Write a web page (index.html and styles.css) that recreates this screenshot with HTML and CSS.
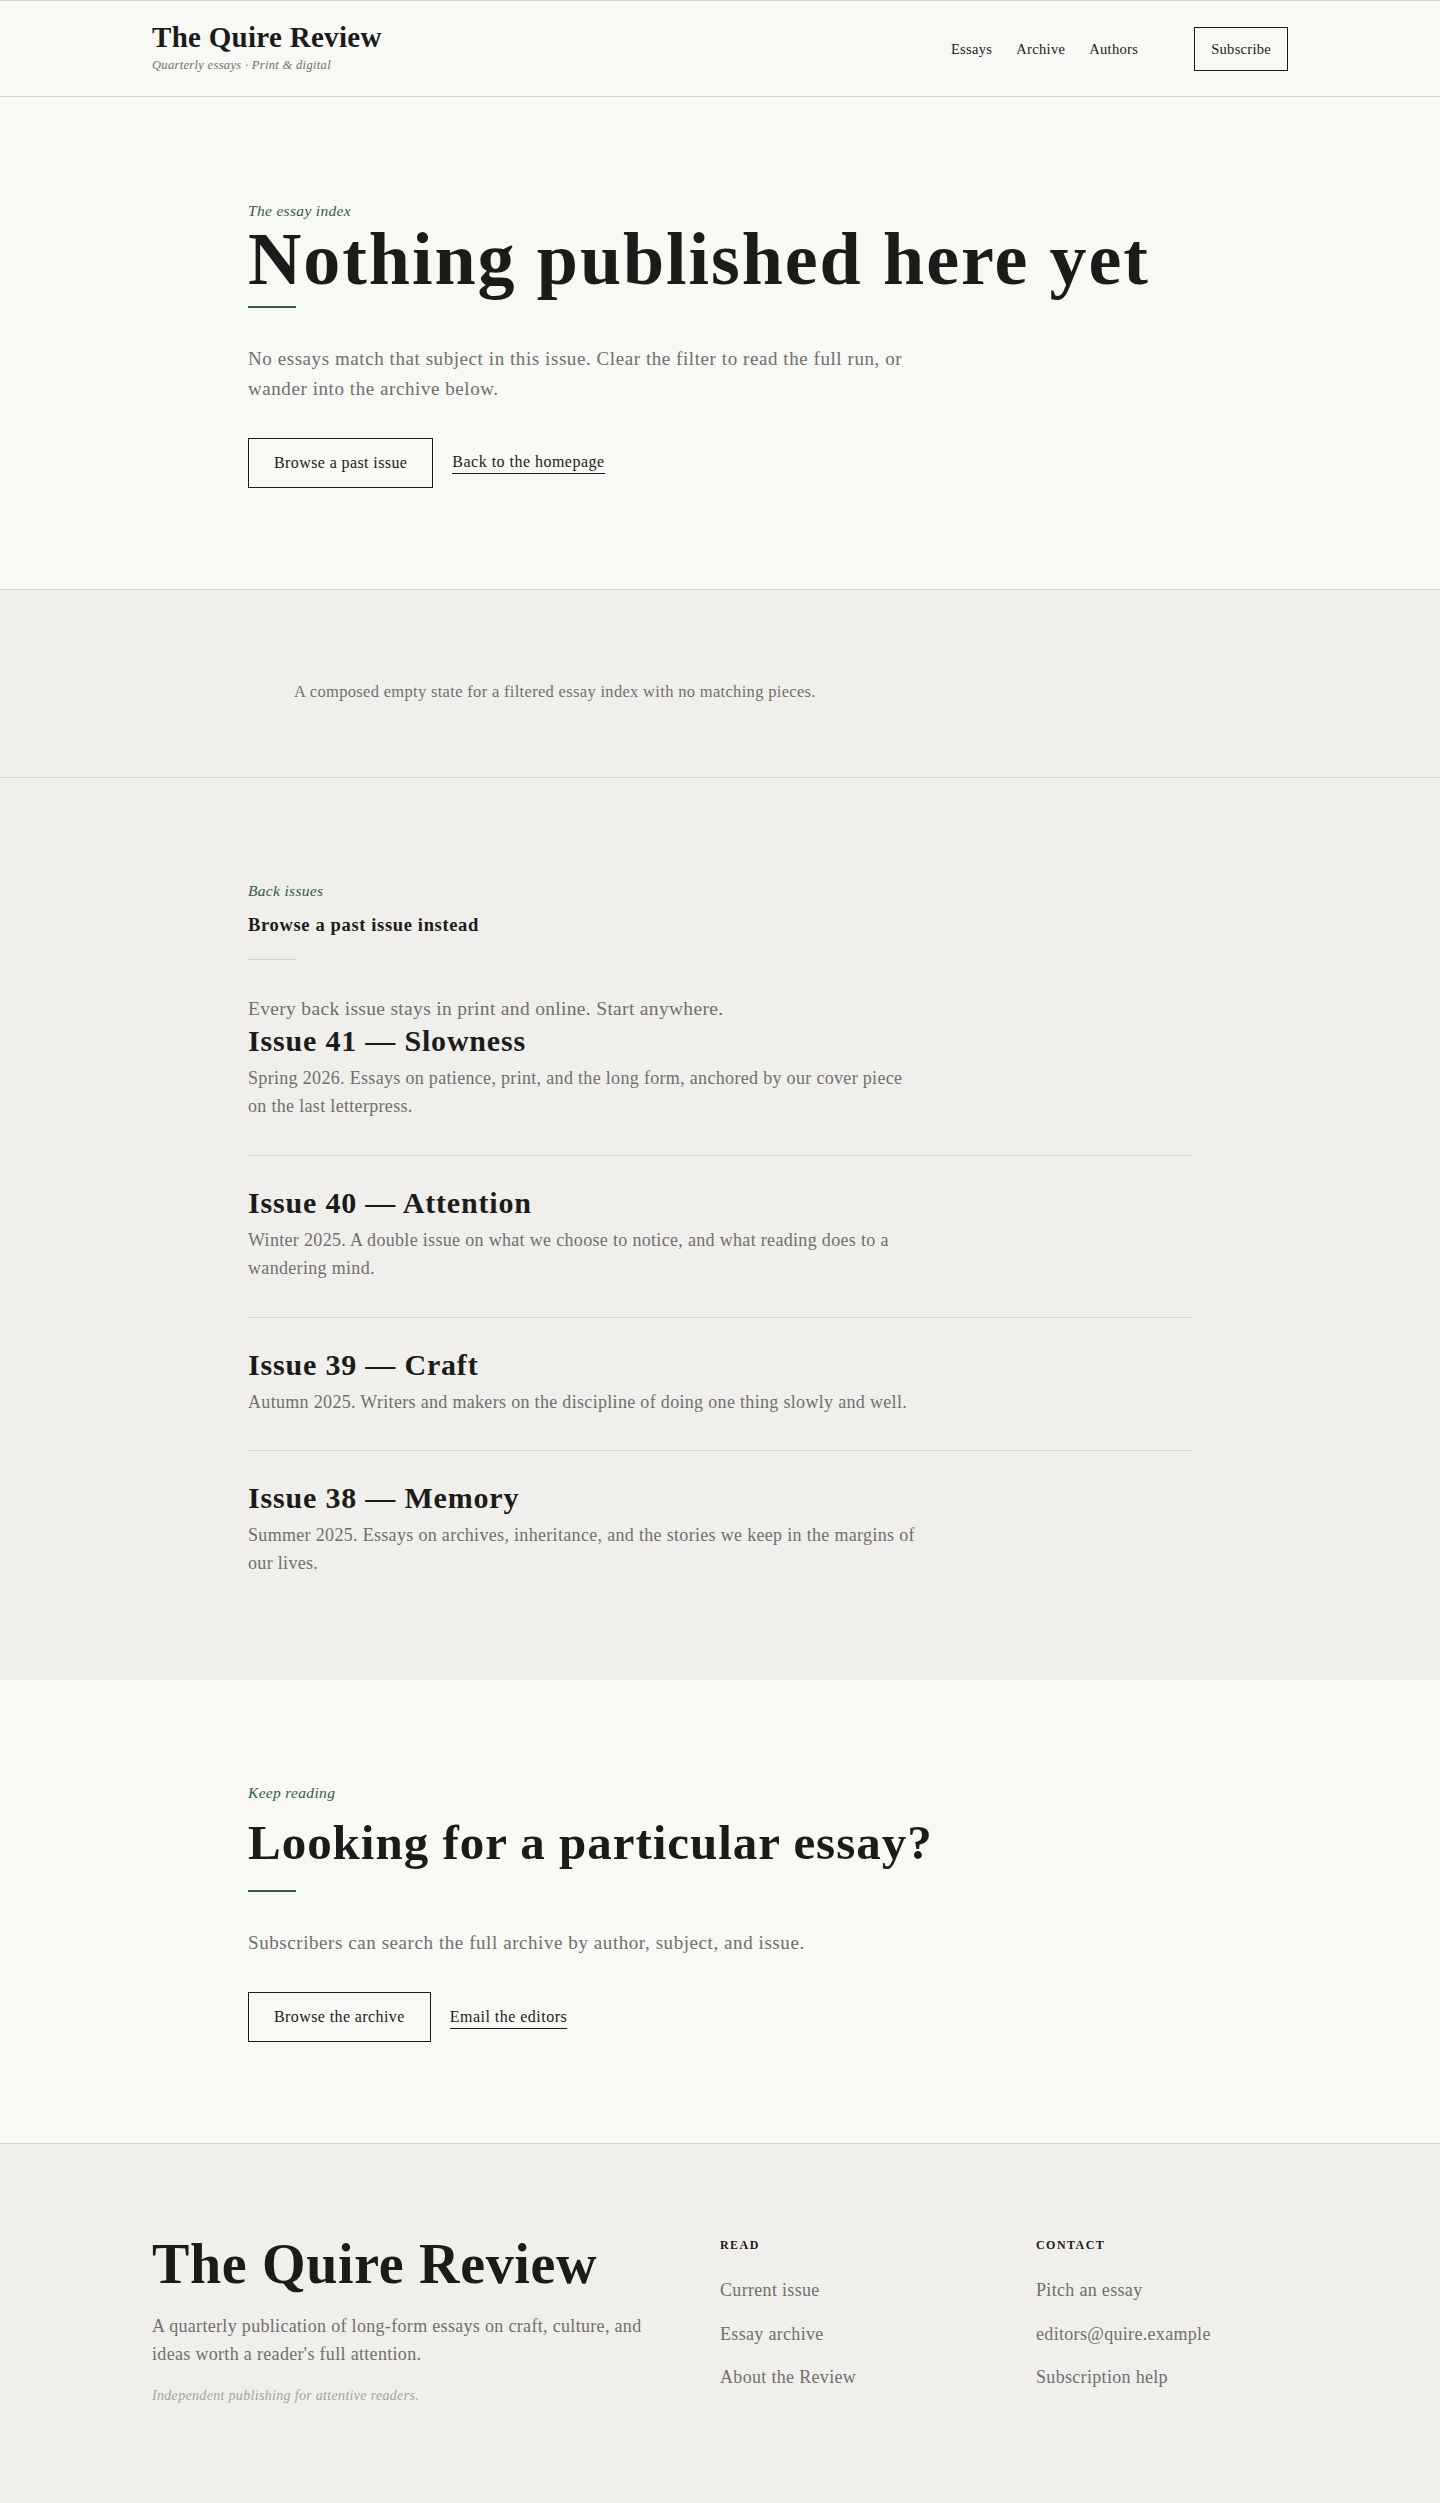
FILE: index.html
```html
<!DOCTYPE html>
<html lang="en">
<head>
<meta charset="utf-8">
<title>The Quire Review — Essay index</title>
<link rel="stylesheet" href="styles.css">
</head>
<body>
<header class="site-header">
  <div class="wide header-inner">
    <div class="brand">
      <a class="logo" href="#">The Quire Review</a>
      <p class="tagline">Quarterly essays · Print &amp; digital</p>
    </div>
    <div class="header-right">
      <nav class="nav">
        <a href="#">Essays</a>
        <a href="#">Archive</a>
        <a href="#">Authors</a>
      </nav>
      <a class="btn btn-sm" href="#">Subscribe</a>
    </div>
  </div>
</header>

<main>
  <section class="hero">
    <div class="narrow">
      <p class="eyebrow">The essay index</p>
      <h1 class="hero-title">Nothing published here yet</h1>
      <span class="accent-rule"></span>
      <p class="lede">No essays match that subject in this issue. Clear the filter to read the full run, or wander into the archive below.</p>
      <div class="actions">
        <a class="btn" href="#">Browse a past issue</a>
        <a class="text-link" href="#">Back to the homepage</a>
      </div>
    </div>
  </section>

  <section class="figure-band">
    <div class="narrow">
      <p class="caption">A composed empty state for a filtered essay index with no matching pieces.</p>
    </div>
  </section>

  <section class="issues">
    <div class="narrow">
      <p class="eyebrow eyebrow-sm">Back issues</p>
      <h2 class="issues-title">Browse a past issue instead</h2>
      <span class="thin-rule"></span>
      <p class="issues-intro">Every back issue stays in print and online. Start anywhere.</p>
      <ul class="issue-list">
        <li class="issue">
          <h3 class="issue-name">Issue 41 — Slowness</h3>
          <p class="issue-desc">Spring 2026. Essays on patience, print, and the long form, anchored by our cover piece on the last letterpress.</p>
        </li>
        <li class="issue">
          <h3 class="issue-name">Issue 40 — Attention</h3>
          <p class="issue-desc">Winter 2025. A double issue on what we choose to notice, and what reading does to a wandering mind.</p>
        </li>
        <li class="issue">
          <h3 class="issue-name">Issue 39 — Craft</h3>
          <p class="issue-desc">Autumn 2025. Writers and makers on the discipline of doing one thing slowly and well.</p>
        </li>
        <li class="issue">
          <h3 class="issue-name">Issue 38 — Memory</h3>
          <p class="issue-desc">Summer 2025. Essays on archives, inheritance, and the stories we keep in the margins of our lives.</p>
        </li>
      </ul>
    </div>
  </section>

  <section class="cta">
    <div class="narrow">
      <p class="eyebrow eyebrow-sm">Keep reading</p>
      <h2 class="cta-title">Looking for a particular essay?</h2>
      <span class="accent-rule"></span>
      <p class="lede">Subscribers can search the full archive by author, subject, and issue.</p>
      <div class="actions">
        <a class="btn" href="#">Browse the archive</a>
        <a class="text-link" href="#">Email the editors</a>
      </div>
    </div>
  </section>
</main>

<footer class="site-footer">
  <div class="wide footer-grid">
    <div class="footer-brand">
      <p class="footer-logo">The Quire Review</p>
      <p class="footer-about">A quarterly publication of long-form essays on craft, culture, and ideas worth a reader's full attention.</p>
      <p class="footer-note">Independent publishing for attentive readers.</p>
    </div>
    <div class="footer-col">
      <h4 class="footer-head">Read</h4>
      <ul class="footer-links">
        <li><a href="#">Current issue</a></li>
        <li><a href="#">Essay archive</a></li>
        <li><a href="#">About the Review</a></li>
      </ul>
    </div>
    <div class="footer-col">
      <h4 class="footer-head">Contact</h4>
      <ul class="footer-links">
        <li><a href="#">Pitch an essay</a></li>
        <li><a href="#">editors@quire.example</a></li>
        <li><a href="#">Subscription help</a></li>
      </ul>
    </div>
  </div>
</footer>
</body>
</html>
```

FILE: styles.css
```css
:root {
  --ink: #1b1b19;
  --muted: #6f6f6c;
  --soft: #a3a3a0;
  --green: #2d5f40;
  --line: #d3d3cf;
  --paper: #f8f8f5;
  --paper-2: #f0efec;
  --serif: "Liberation Serif", "Times New Roman", serif;
}

* { box-sizing: border-box; }

html, body {
  margin: 0;
  padding: 0;
}

body {
  background: var(--paper);
  color: var(--ink);
  font-family: var(--serif);
  letter-spacing: 0.02em;
}

a { color: inherit; text-decoration: none; }
p, h1, h2, h3, h4, ul { margin: 0; padding: 0; }
ul { list-style: none; }

.wide {
  max-width: 1136px;
  margin: 0 auto;
}

.narrow {
  max-width: 944px;
  margin: 0 auto;
}

/* Header */
.site-header {
  border-top: 1px solid var(--line);
  border-bottom: 1px solid var(--line);
  background: var(--paper);
}

.header-inner {
  height: 95px;
  display: flex;
  align-items: center;
  justify-content: space-between;
}

.logo {
  display: block;
  font-size: 29px;
  font-weight: 700;
  line-height: 1.1;
  letter-spacing: 0.01em;
}

.tagline {
  font-size: 12.5px;
  font-style: italic;
  line-height: 1.4;
  color: var(--muted);
  margin-top: 3px;
}

.header-right {
  display: flex;
  align-items: center;
}

.nav {
  display: flex;
  gap: 24px;
  margin-right: 56px;
}

.nav a {
  font-size: 14.5px;
  line-height: 20px;
}

.btn {
  display: inline-block;
  border: 1px solid var(--ink);
  font-size: 16px;
  line-height: 24px;
  padding: 12px 25px;
  color: var(--ink);
  letter-spacing: 0.025em;
}

.btn-sm {
  font-size: 14.5px;
  line-height: 20px;
  padding: 11px 16px;
  letter-spacing: 0.02em;
}

/* Hero */
.hero {
  padding: 103px 0 101px;
  border-bottom: 1px solid var(--line);
}

.eyebrow {
  font-size: 15.5px;
  font-style: italic;
  line-height: 1.4;
  color: var(--green);
}

.hero-title {
  font-size: 74px;
  line-height: 1;
  font-weight: 700;
  letter-spacing: 0.026em;
}

.accent-rule {
  display: block;
  width: 48px;
  height: 2px;
  background: var(--green);
  margin-top: 10px;
}

.lede {
  font-size: 19px;
  line-height: 30px;
  color: var(--muted);
  max-width: 680px;
  margin-top: 36px;
  letter-spacing: 0.03em;
}

.actions {
  display: flex;
  align-items: center;
  gap: 19px;
  margin-top: 34px;
}

.text-link {
  font-size: 16px;
  line-height: 22px;
  border-bottom: 1px solid var(--ink);
  letter-spacing: 0.03em;
}

/* Figure band */
.figure-band {
  background: var(--paper-2);
  padding: 90px 0 73px;
  border-bottom: 1px solid var(--line);
}

.caption {
  padding-left: 46px;
  font-size: 16.5px;
  line-height: 1.5;
  color: var(--muted);
}

/* Issues */
.issues {
  background: var(--paper-2);
  padding: 102px 0 102px;
}

.issues-title {
  font-size: 18.5px;
  font-weight: 700;
  line-height: 24px;
  margin-top: 11px;
  letter-spacing: 0.035em;
}

.thin-rule {
  display: block;
  width: 48px;
  height: 1px;
  background: var(--line);
  margin-top: 22px;
}

.issues-intro {
  font-size: 19.5px;
  line-height: 30px;
  color: var(--muted);
  margin-top: 34px;
}

.issue {
  padding-bottom: 34px;
}

.issue + .issue {
  border-top: 1px solid var(--line);
  padding-top: 30px;
}

.issue:last-child { padding-bottom: 0; }

.issue-name {
  font-size: 30px;
  line-height: 1.16;
  font-weight: 700;
  letter-spacing: 0.027em;
}

.issue-desc {
  font-size: 18px;
  line-height: 28.5px;
  color: var(--muted);
  max-width: 670px;
  margin-top: 5px;
}

/* CTA */
.cta {
  padding: 102px 0 101px;
  border-bottom: 1px solid var(--line);
}

.cta-title {
  font-size: 49px;
  line-height: 1.1;
  font-weight: 700;
  letter-spacing: 0.02em;
  margin-top: 12px;
}

.cta .accent-rule { margin-top: 21px; }

/* Footer */
.site-footer {
  background: var(--paper-2);
  padding: 90px 0 98px;
}

.footer-grid {
  display: grid;
  grid-template-columns: 2fr 1fr 1fr;
  gap: 64px;
  align-items: start;
}

.footer-logo {
  font-size: 56px;
  line-height: 1.1;
  font-weight: 700;
  letter-spacing: 0.012em;
}

.footer-about {
  font-size: 18px;
  line-height: 28.5px;
  color: var(--muted);
  max-width: 500px;
  margin-top: 16px;
}

.footer-note {
  font-size: 14px;
  line-height: 21px;
  font-style: italic;
  color: var(--soft);
  margin-top: 16px;
}

.footer-head {
  font-size: 12px;
  line-height: 16.8px;
  font-weight: 700;
  text-transform: uppercase;
  letter-spacing: 0.12em;
  margin-top: 3px;
}

.footer-links {
  display: flex;
  flex-direction: column;
  gap: 16.5px;
  margin-top: 23px;
}

.footer-links a {
  font-size: 18px;
  line-height: 27px;
  color: var(--muted);
}
```
